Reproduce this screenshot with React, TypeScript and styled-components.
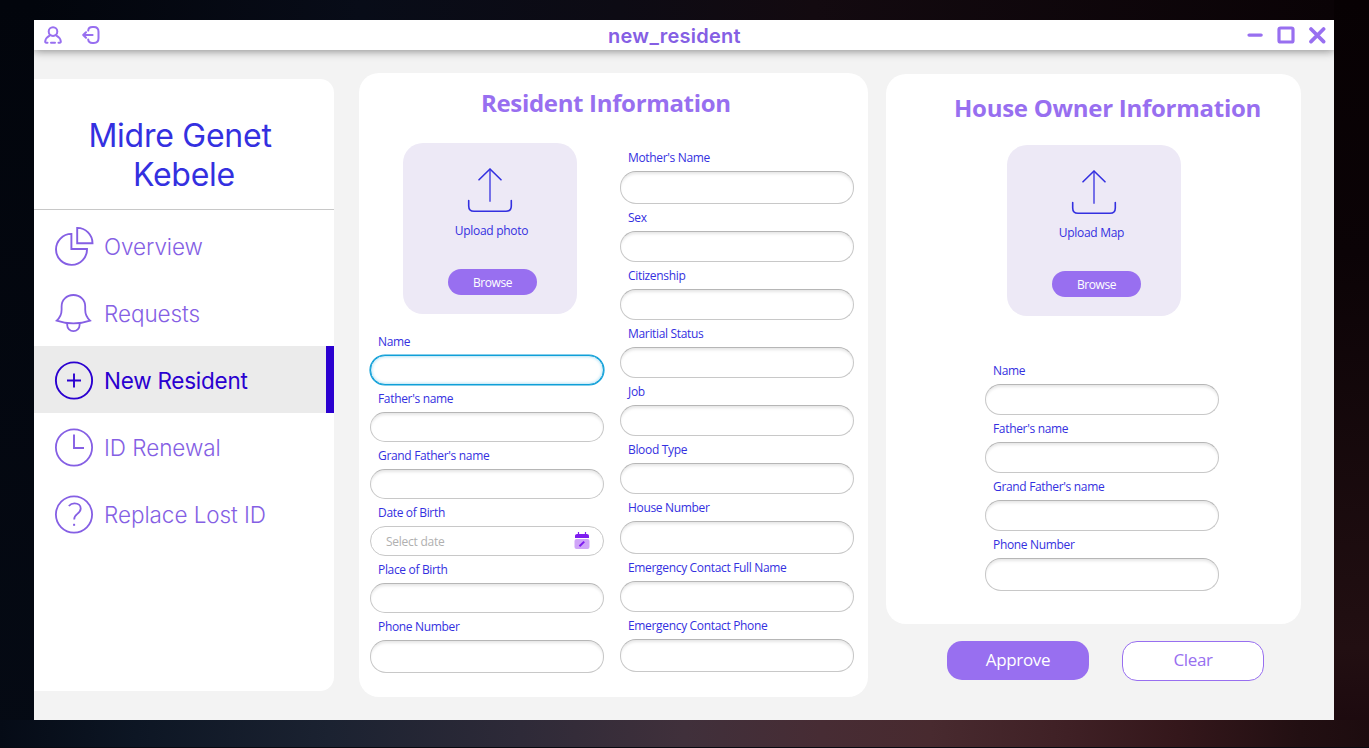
import React from "react";
import styled, { createGlobalStyle } from "styled-components";

const violet = "#986ff0";
const violetDark = "#855fe4";
const blue = "#3430e0";
const ink = "#2a00d0";
const ui = `"Open Sans", "Noto Sans", sans-serif`;
const inter = `Inter, "Liberation Sans", sans-serif`;

const GlobalStyle = createGlobalStyle`
  * { box-sizing: border-box; }
  body { margin: 0; background: #05060b; }
  button { font: inherit; padding: 0; cursor: pointer; }
`;

const Desktop = styled.div`
  width: 1369px;
  height: 748px;
  padding: 20px 35px 28px 34px;
  overflow: hidden;
  background:
    linear-gradient(to right, #060a12, #0a0a10) 0 747px / 100% 1px no-repeat,
    linear-gradient(to right, #050b16 0%, #0d1624 10%, #1b2231 24%, #2e2a38 38%, #40303b 50%, #472c34 60%, #482a2f 68%, #3f2025 78%, #34171b 86%, #220f12 95%, #1d0c0f 100%) 0 720px / 100% 28px no-repeat,
    linear-gradient(to bottom, #070103 0%, #0b0306 35%, #220f12 90%, #1d0a0f 100%) 1334px 0 / 35px 720px no-repeat,
    linear-gradient(to right, #02050c 0%, #080c18 25%, #0d0b14 45%, #130a10 60%, #0a0306 100%) 34px 0 / 1300px 20px no-repeat,
    linear-gradient(to bottom, #02050c, #050a14);
`;

const Window = styled.main`
  width: 1300px;
  height: 700px;
  background: #f3f3f3;
  display: flex;
  flex-direction: column;
`;

const TitleBar = styled.header`
  height: 30px;
  flex: none;
  display: grid;
  grid-template-columns: 1fr auto 1fr;
  align-items: center;
  background: #fff;
  box-shadow: 0 1px 9px rgba(0, 0, 0, 0.45);
  clip-path: inset(0 0 -14px 0);
`;

const BarIcons = styled.div<{ $end?: boolean }>`
  display: flex;
  align-items: center;
  gap: ${(p) => (p.$end ? 13 : 20)}px;
  padding: ${(p) => (p.$end ? "0 8px 0 0" : "0 0 0 10px")};
  justify-content: ${(p) => (p.$end ? "flex-end" : "flex-start")};
  color: ${violet};
  svg { display: block; }
`;

const WindowTitle = styled.h1`
  margin: 0;
  padding: 2px 19px 0 0;
  font: 600 20px/28px ${inter};
  letter-spacing: 0.25px;
  color: ${violetDark};
`;

const Body = styled.div`
  flex: 1;
  display: flex;
  align-items: flex-start;
`;

const Sidebar = styled.aside`
  width: 300px;
  height: 612px;
  margin-top: 29px;
  background: #fff;
  border-radius: 0 14px 14px 0;
`;

const Brand = styled.h2`
  margin: 0 0 2px;
  height: 131px;
  padding: 37px 8px 0 0;
  border-bottom: 1px solid #c8c8c8;
  font: 400 32px/39px ${inter};
  letter-spacing: -0.25px;
  text-align: center;
  color: ${blue};
  span { display: block; }
  span + span { padding-left: 8px; }
`;

const NavItem = styled.a<{ $active?: boolean }>`
  height: 67px;
  padding: 2px 0 0 20px;
  display: flex;
  align-items: center;
  gap: 10px;
  font: ${(p) => (p.$active ? 400 : 300)} 22.5px/30px ${inter};
  letter-spacing: ${(p) => (p.$active ? -0.25 : -0.06)}px;
  color: ${(p) => (p.$active ? ink : violetDark)};
  background: ${(p) => (p.$active ? "#ebebeb" : "transparent")};
  box-shadow: ${(p) => (p.$active ? `inset -8px 0 0 ${ink}` : "none")};
  svg { display: block; flex: none; margin-top: -2px; }
`;

const ResidentCard = styled.section`
  width: 509px;
  height: 624px;
  margin: 23px 0 0 25px;
  padding: 0 14px 0 11px;
  background: #fff;
  border-radius: 20px;
`;

const CardTitle = styled.h2<{ $left: number; $tracking: number }>`
  margin: 0;
  height: 60px;
  padding-left: ${(p) => p.$left}px;
  font: 700 24px/60px ${ui};
  letter-spacing: ${(p) => p.$tracking}px;
  white-space: nowrap;
  color: ${violet};
`;

const Columns = styled.div`
  display: flex;
  gap: 16px;
`;

const Column = styled.div<{ $top: number; $left?: number }>`
  width: 234px;
  margin-left: ${(p) => p.$left ?? 0}px;
  padding-top: ${(p) => p.$top}px;
`;

const OwnerSide = styled.div`
  width: 415px;
  margin: 24px 0 0 18px;
`;

const OwnerCard = styled.section`
  height: 550px;
  padding-top: 4px;
  background: #fff;
  border-radius: 20px;
`;

const UploadBox = styled.div<{ $left: number }>`
  width: 174px;
  height: 171px;
  margin-left: ${(p) => p.$left}px;
  padding-top: 25px;
  display: flex;
  flex-direction: column;
  align-items: center;
  background: #ede9f6;
  border-radius: 20px;
  svg { display: block; }
`;

const UploadText = styled.div<{ $before?: number; $after?: number }>`
  margin: 7px 0 28px;
  padding: 0 ${(p) => p.$after ?? 0}px 0 ${(p) => p.$before ?? 0}px;
  font: 400 12px/20px ${ui};
  letter-spacing: -0.3px;
  color: ${blue};
`;

const Browse = styled.button`
  width: 89px;
  height: 26px;
  margin-left: 5px;
  border: 0;
  border-radius: 13px;
  background: ${violet};
  color: #fff;
  font: 400 12px/25px ${ui};
  letter-spacing: -0.4px;
`;

const Fields = styled.div<{ $top?: number }>`
  display: flex;
  flex-direction: column;
  gap: 4px;
  padding-top: ${(p) => p.$top ?? 0}px;
`;

const Field = styled.label`
  display: flex;
  flex-direction: column;
  gap: 3px;
  width: 234px;
`;

const Label = styled.span`
  padding-left: 8px;
  font: 400 12px/20px ${ui};
  letter-spacing: -0.33px;
  color: ${blue};
`;

const InputShell = styled.span<{ $h: number; $focused?: boolean; $plain?: boolean }>`
  height: ${(p) => p.$h}px;
  display: flex;
  align-items: center;
  justify-content: space-between;
  padding: 0 13px 0 15px;
  border: 1px solid ${(p) => (p.$focused ? "#0e9fd8" : "#c8c8c8")};
  border-top-color: ${(p) => (p.$focused ? "#0e9fd8" : p.$plain ? "#c8c8c8" : "#b6b6b6")};
  border-radius: 16px;
  background: #fff;
  box-shadow: ${(p) =>
    p.$focused
      ? "0 0 0 0.6px #0e9fd8, inset 0 0 3px 1px #b9e4f5"
      : p.$plain
        ? "none"
        : "inset 0 3px 3px -1px rgba(0, 0, 0, 0.1)"};
`;

const Input = styled.input`
  width: 100%;
  min-width: 0;
  border: 0;
  padding: 2px 0 0;
  outline: none;
  background: transparent;
  font: 400 12px/20px ${ui};
  letter-spacing: -0.25px;
  color: ${blue};
  &::placeholder { color: #b0b0b0; opacity: 1; }
`;

const Actions = styled.div`
  display: flex;
  gap: 33px;
  padding: 17px 0 0 61px;
`;

const ActionButton = styled.button<{ $outline?: boolean }>`
  width: 142px;
  height: ${(p) => (p.$outline ? 40 : 39)}px;
  padding-bottom: 2px;
  border: ${(p) => (p.$outline ? `1px solid ${violet}` : "0")};
  border-radius: 15px;
  background: ${(p) => (p.$outline ? "#fff" : violet)};
  color: ${(p) => (p.$outline ? violet : "#fff")};
  font: 400 17px/34px ${ui};
  letter-spacing: -0.35px;
`;

const UserIcon = () => (
  <svg width="18" height="18" viewBox="0 0 18 18" fill="none" stroke="currentColor" strokeWidth="2" strokeLinecap="round">
    <circle cx="9" cy="5.6" r="4.3" />
    <path d="M5.6 9.6C3.2 10.8 1.6 12.6 1.2 15.4c-.1.9.3 1.3 1.1 1.3h1.2M12.4 9.6c2.4 1.2 4 3 4.4 5.8.1.9-.3 1.3-1.1 1.3h-1.2M7 16.7h4" />
  </svg>
);

const LogoutIcon = () => (
  <svg width="18" height="18" viewBox="0 0 18 18" fill="none" stroke="currentColor" strokeWidth="2" strokeLinecap="round" strokeLinejoin="round">
    <path d="M6.2 4.6C6.4 2 7.6 1.1 10.4 1.1h1.4c3.200 0 4.700 1.400 4.700 4.600v6.600c0 3.200-1.500 4.600-4.700 4.600h-1.400c-2.800 0-4-.9-4.200-3.500" />
    <path d="M10.600 9H1.400M4 6.200 1.200 9 4 11.800" />
  </svg>
);

const MinimizeIcon = () => (
  <svg width="18" height="18" viewBox="0 0 18 18">
    <rect x="1.400" y="7.400" width="15.400" height="3.400" rx="1.700" fill="currentColor" />
  </svg>
);

const MaximizeIcon = () => (
  <svg width="18" height="18" viewBox="0 0 18 18">
    <rect x="2" y="2" width="14" height="14" rx="1.600" fill="none" stroke="currentColor" strokeWidth="3.200" />
  </svg>
);

const CloseIcon = () => (
  <svg width="18" height="18" viewBox="0 0 18 18">
    <path d="M3 3l12.600 12.600M15.600 3 3 15.600" stroke="currentColor" strokeWidth="3.700" strokeLinecap="round" />
  </svg>
);

const NavSvg = ({ children }: { children: React.ReactNode }) => (
  <svg width="40" height="40" viewBox="0 0 40 40" fill="none" stroke="currentColor" strokeWidth="1.9">
    {children}
  </svg>
);

const navItems = [
  {
    label: "Overview",
    icon: (
      <>
        <path d="M17.400 7.900A15.500 15.500 0 1 0 33 23H17.400Z" />
        <path d="M23.200 1.900V17.200H38.500A15.300 15.300 0 0 0 23.200 1.900Z" />
      </>
    ),
  },
  {
    label: "Requests",
    icon: (
      <>
        <path d="M19.400 2C12.400 2 7.600 7 7.600 13.400v3.400c0 4.600-1.700 8-4.900 10.800 10 3.600 23.400 3.600 33.400 0-3.200-2.800-4.900-6.200-4.900-10.800v-3.400C31.200 7 26.400 2 19.400 2Z" strokeWidth="1.800" />
        <path d="M13.200 30.600v1.400a6.200 6.200 0 0 0 12.400 0v-1.400" strokeWidth="1.800" />
      </>
    ),
  },
  {
    label: "New Resident",
    active: true,
    icon: (
      <>
        <circle cx="20" cy="20.500" r="18.100" />
        <path d="M20 13.500v14M13 20.500h14" />
      </>
    ),
  },
  {
    label: "ID Renewal",
    icon: (
      <>
        <circle cx="20" cy="20.500" r="18.100" strokeWidth="1.800" />
        <path d="M20 7.500v13.500h10" />
      </>
    ),
  },
  {
    label: "Replace Lost ID",
    icon: (
      <>
        <circle cx="20" cy="20.500" r="18.100" strokeWidth="1.800" />
        <path d="M14.800 12c1.500-1.700 3.500-2.600 5.700-2.600 3.700 0 6.200 2.100 6.200 5 0 2.700-1.700 4.200-3.600 5.700-2.100 1.600-2.900 2.900-2.900 5.400" strokeWidth="1.800" />
        <path d="M20.100 29.800v2" strokeWidth="2" />
      </>
    ),
  },
];

const UploadIcon = () => (
  <svg width="46" height="46" viewBox="0 0 46 46" fill="none" stroke={blue} strokeWidth="1.600" strokeLinecap="round" strokeLinejoin="round">
    <path d="M12 11.800 23 1l11 10.800" />
    <path d="M23 1.400V33" strokeOpacity="0.650" strokeWidth="2" />
    <path d="M1.700 32.500v5.400c0 3.500 1.800 5.300 5.300 5.300h32c3.500 0 5.300-1.800 5.300-5.300v-5.400" />
  </svg>
);

const CalendarSvg = styled.svg`
  flex: none;
  display: block;
  margin-top: -1px;
`;

const CalendarIcon = () => (
  <CalendarSvg width="16" height="17" viewBox="0 0 16 17">
    <rect x="0.500" y="7" width="15" height="10" rx="2" fill="#cfa4f8" />
    <path d="M1 6V4.200C1 2.700 1.800 2 3.200 2h9.600C14.200 2 15 2.700 15 4.200V6Z" fill="#7e1cf0" />
    <path d="M4.500 0v3M11.500 0v3" stroke="#7e1cf0" strokeWidth="1.200" />
    <path d="M5.500 14.300 10.200 9.600" stroke="#7e1cf0" strokeWidth="2" />
  </CalendarSvg>
);

type FieldSpec = { label: string; h?: number; focused?: boolean; date?: boolean };

const residentLeft: FieldSpec[] = [
  { label: "Name", focused: true },
  { label: "Father's name" },
  { label: "Grand Father's name" },
  { label: "Date of Birth", date: true },
  { label: "Place of Birth" },
  { label: "Phone Number", h: 33 },
];

const residentRight: FieldSpec[] = [
  { label: "Mother's Name", h: 33 },
  { label: "Sex", h: 31 },
  { label: "Citizenship", h: 31 },
  { label: "Maritial Status", h: 31 },
  { label: "Job", h: 31 },
  { label: "Blood Type", h: 31 },
  { label: "House Number", h: 33 },
  { label: "Emergency Contact Full Name", h: 31 },
  { label: "Emergency Contact Phone", h: 33 },
];

const ownerFields: FieldSpec[] = [
  { label: "Name", h: 31 },
  { label: "Father's name", h: 31 },
  { label: "Grand Father's name", h: 31 },
  { label: "Phone Number", h: 33 },
];

const FieldList = ({ items, top }: { items: FieldSpec[]; top?: number }) => (
  <Fields $top={top}>
    {items.map((f) => (
      <Field key={f.label}>
        <Label>{f.label}</Label>
        <InputShell $h={f.h ?? 30} $focused={f.focused} $plain={f.date}>
          <Input placeholder={f.date ? "Select date" : undefined} />
          {f.date && <CalendarIcon />}
        </InputShell>
      </Field>
    ))}
  </Fields>
);

type UploadProps = { text: string; left: number; before?: number; after?: number };

const Upload = ({ text, left, before, after }: UploadProps) => (
  <UploadBox $left={left}>
    <UploadIcon />
    <UploadText $before={before} $after={after}>{text}</UploadText>
    <Browse>Browse</Browse>
  </UploadBox>
);

export default function App() {
  return (
    <Desktop>
      <GlobalStyle />
      <Window>
        <TitleBar>
          <BarIcons>
            <UserIcon />
            <LogoutIcon />
          </BarIcons>
          <WindowTitle>new_resident</WindowTitle>
          <BarIcons $end>
            <MinimizeIcon />
            <MaximizeIcon />
            <CloseIcon />
          </BarIcons>
        </TitleBar>
        <Body>
          <Sidebar>
            <Brand>
              <span>Midre Genet</span>
              <span>Kebele</span>
            </Brand>
            <nav>
              {navItems.map((n) => (
                <NavItem key={n.label} $active={n.active}>
                  <NavSvg>{n.icon}</NavSvg>
                  {n.label}
                </NavItem>
              ))}
            </nav>
          </Sidebar>
          <ResidentCard>
            <CardTitle $left={111} $tracking={-0.33}>Resident Information</CardTitle>
            <Columns>
              <Column $top={10}>
                <Upload text="Upload photo" left={33} before={3} />
                <FieldList items={residentLeft} top={18} />
              </Column>
              <Column $top={15}>
                <FieldList items={residentRight} />
              </Column>
            </Columns>
          </ResidentCard>
          <OwnerSide>
            <OwnerCard>
              <CardTitle $left={68} $tracking={-0.27}>House Owner Information</CardTitle>
              <Column $top={7} $left={99}>
                <Upload text="Upload Map" left={22} after={5} />
                <FieldList items={ownerFields} top={45} />
              </Column>
            </OwnerCard>
            <Actions>
              <ActionButton>Approve</ActionButton>
              <ActionButton $outline>Clear</ActionButton>
            </Actions>
          </OwnerSide>
        </Body>
      </Window>
    </Desktop>
  );
}
